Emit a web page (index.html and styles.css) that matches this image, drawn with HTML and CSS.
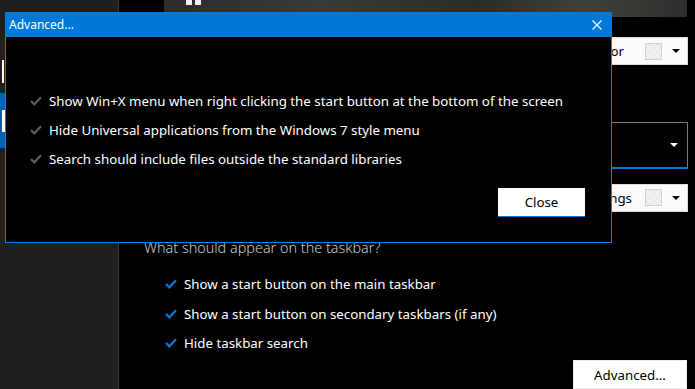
FILE: index.html
```html
<!DOCTYPE html>
<html lang="en">
<head>
  <meta charset="UTF-8" />
  <title>Start menu settings</title>
  <link rel="stylesheet" href="styles.css">
</head>
<body>
  <div class="app">
    <nav class="sidebar">
      <div class="nav-item"><span class="glyph"></span></div>
      <div class="nav-item active"><span class="glyph"></span></div>
    </nav>

    <main class="content">
      <div class="banner-row">
        <div class="banner">
          <span class="logo-tile"></span><span class="logo-tile"></span>
        </div>
      </div>

      <div class="combo light first">
        <span class="combo-text">Accent color</span>
        <svg class="swatch" width="17" height="17" viewBox="0 0 17 17">
          <rect x="0.5" y="0.5" width="16" height="16" fill="#eaeaea" stroke="#d0d0d0"/>
          <path d="M1 8.5 L8.5 1 L16 8.5 L8.5 16 Z M1 1 L16 16 M16 1 L1 16" fill="none" stroke="#f8f8f8" stroke-width="1"/>
        </svg>
        <span class="arrow dark"></span>
      </div>

      <div class="combo big">
        <span class="arrow white"></span>
      </div>

      <div class="combo light third">
        <span class="combo-text">Settings</span>
        <svg class="swatch" width="17" height="17" viewBox="0 0 17 17">
          <rect x="0.5" y="0.5" width="16" height="16" fill="#eaeaea" stroke="#d0d0d0"/>
          <path d="M1 8.5 L8.5 1 L16 8.5 L8.5 16 Z M1 1 L16 16 M16 1 L1 16" fill="none" stroke="#f8f8f8" stroke-width="1"/>
        </svg>
        <span class="arrow dark"></span>
      </div>

      <h2 class="question">What should appear on the taskbar?</h2>
      <ul class="checks">
        <li><svg class="tick" width="12" height="10" viewBox="0 0 12 10"><path d="M1 5 L4.3 8.3 L11 1.3" fill="none" stroke="#0078d7" stroke-width="2.3"/></svg>Show a start button on the main taskbar</li>
        <li><svg class="tick" width="12" height="10" viewBox="0 0 12 10"><path d="M1 5 L4.3 8.3 L11 1.3" fill="none" stroke="#0078d7" stroke-width="2.3"/></svg>Show a start button on secondary taskbars (if any)</li>
        <li><svg class="tick" width="12" height="10" viewBox="0 0 12 10"><path d="M1 5 L4.3 8.3 L11 1.3" fill="none" stroke="#0078d7" stroke-width="2.3"/></svg>Hide taskbar search</li>
      </ul>
      <div class="actions">
        <button class="btn">Advanced...</button>
      </div>
    </main>
  </div>

  <div class="dialog">
    <div class="titlebar">
      <span>Advanced...</span>
      <svg class="close-x" width="10" height="10" viewBox="0 0 10 10"><path d="M0.5 0.5 L9.5 9.5 M9.5 0.5 L0.5 9.5" stroke="#fff" stroke-width="1.1"/></svg>
    </div>
    <div class="dialog-body">
      <ul class="checks muted">
        <li><svg class="tick" width="12" height="10" viewBox="0 0 12 10"><path d="M1 5 L4.3 8.3 L11 1.3" fill="none" stroke="#5c5c5c" stroke-width="2.3"/></svg>Show Win+X menu when right clicking the start button at the bottom of the screen</li>
        <li><svg class="tick" width="12" height="10" viewBox="0 0 12 10"><path d="M1 5 L4.3 8.3 L11 1.3" fill="none" stroke="#5c5c5c" stroke-width="2.3"/></svg>Hide Universal applications from the Windows 7 style menu</li>
        <li><svg class="tick" width="12" height="10" viewBox="0 0 12 10"><path d="M1 5 L4.3 8.3 L11 1.3" fill="none" stroke="#5c5c5c" stroke-width="2.3"/></svg>Search should include files outside the standard libraries</li>
      </ul>
      <div class="dialog-actions">
        <button class="btn focused">Close</button>
      </div>
    </div>
  </div>
</body>
</html>
```

FILE: styles.css
```css
body {
  margin: 0;
  background: #000;
  color: #fff;
  font-family: 'Noto Sans', sans-serif;
  font-size: 12px;
  overflow: hidden;
}
.app {
  display: flex;
  height: 389px;
}
.sidebar {
  flex: 0 0 118px;
  background: #1f1f1f;
  border-right: 1px solid #3c3c3c;
  padding-top: 50px;
}
.nav-item {
  height: 43px;
  display: flex;
  align-items: center;
  padding-left: 2px;
}
.nav-item.active {
  background: #0063b1;
  height: 55px;
}
.glyph {
  width: 2px;
  height: 23px;
  background: #fff;
}
.active .glyph {
  width: 3px;
  height: 22px;
}
.content {
  flex: 1;
  min-width: 0;
  display: flex;
  flex-direction: column;
}
.banner-row {
  padding-left: 45px;
  height: 17px;
}
.banner {
  box-sizing: border-box;
  width: 523px;
  height: 17px;
  background: linear-gradient(90deg, #2b2d2c, #3a3b38 30%, #2c2b28 60%, #41403c 80%, #2e2f2d);
  display: flex;
  gap: 3px;
  padding-left: 22px;
}
.logo-tile {
  width: 6px;
  height: 5px;
  background: #eef0f5;
}
.combo {
  align-self: flex-end;
  margin-right: 7px;
  display: flex;
  align-items: center;
  box-sizing: border-box;
}
.combo.light {
  background: #fbfbfb;
  border: 1px solid #dadada;
  color: #000;
  font-size: 13.3px;
  height: 30px;
  padding: 0 7px 0 10px;
}
.combo.first {
  margin-top: 20px;
}
.combo.big {
  margin-top: 57px;
  width: 300px;
  height: 49px;
  border: 1px solid #7a7a7a;
  border-bottom: 2px solid #0078d7;
  justify-content: flex-end;
  padding-right: 9px;
}
.combo.third {
  margin-top: 15px;
  height: 29px;
}
.first .swatch {
  margin-left: 21px;
}
.third .swatch {
  margin-left: 13px;
}
.arrow {
  width: 0;
  height: 0;
  border-left: 4px solid transparent;
  border-right: 4px solid transparent;
  margin-left: 10px;
}
.arrow.dark {
  border-top: 4px solid #000;
}
.arrow.white {
  border-top: 4px solid #fff;
}
.question {
  margin: 26px 0 0 25px;
  font-size: 14.4px;
  font-weight: 300;
  color: #c9c9c9;
  line-height: 20px;
}
.checks {
  list-style: none;
  margin: 0;
  padding: 0;
}
.checks li {
  height: 29.5px;
  display: flex;
  align-items: center;
  font-size: 13.3px;
}
.tick {
  margin-right: 7px;
}
.content .checks {
  margin: 12px 0 0 46px;
}
.actions {
  display: flex;
  justify-content: flex-end;
  margin: 2px 8px 0 0;
}
.btn {
  font-family: 'Noto Sans', sans-serif;
  font-size: 13.3px;
  background: #fff;
  color: #000;
  border: 1px solid #ececec;
  width: 114px;
  height: 29px;
  padding: 0;
}
.dialog {
  position: absolute;
  left: 5px;
  top: 12px;
  width: 607px;
  height: 231px;
  box-sizing: border-box;
  background: #000;
  border: 1px solid #1a7fd4;
  border-top: none;
  display: flex;
  flex-direction: column;
}
.titlebar {
  height: 25px;
  background: #0078d7;
  display: flex;
  align-items: center;
  justify-content: space-between;
  padding: 0 10px 0 4px;
  margin: 0 -1px;
  font-size: 12px;
}
.dialog-body {
  padding: 49px 0 0 24px;
}
.checks.muted li {
  height: 29px;
}
.dialog-actions {
  display: flex;
  justify-content: flex-end;
  margin: 15px 26px 0 0;
}
.btn.focused {
  width: 87px;
  height: 29px;
  border: none;
  border-bottom: 1px solid #0078d7;
}
```
